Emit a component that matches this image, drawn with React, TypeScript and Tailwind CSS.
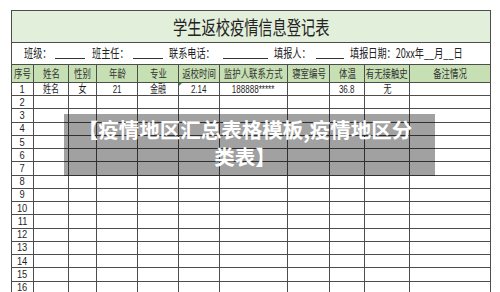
import clsx from "clsx";

const cols =
  "grid grid-cols-[22px_35px_28px_41px_41px_41px_68px_42px_35px_45px_81px]";

const headers = ["序号", "姓名", "性别", "年龄", "专业", "返校时间", "监护人联系方式", "寝室编号", "体温", "有无接触史", "备注情况"];
const first = ["1", "姓名", "女", "21", "金融", "2.14", "188888*****", "", "36.8", "无", ""];

// the source sheet is squeezed sideways, so every label is narrowed
function T({ children, className }: { children: React.ReactNode; className?: string }) {
  return (
    <span className={clsx("inline-block shrink-0 whitespace-nowrap scale-x-[0.73]", className)}>
      {children}
    </span>
  );
}

function Line({ className }: { className: string }) {
  return <span className={clsx("self-end mb-[5px] h-px shrink-0 bg-[#333]", className)} />;
}

function Cell({ children, className }: { children?: React.ReactNode; className?: string }) {
  return (
    <div className={clsx("relative flex items-center justify-center overflow-visible border-r border-b border-[#4d4d4d]", className)}>
      {children}
    </div>
  );
}

export default function App() {
  const rows = Array.from({ length: 16 }, (_, i) => (i === 0 ? first : [String(i + 1), "", "", "", "", "", "", "", "", "", ""]));

  return (
    <div className="relative h-[292px] w-[500px] overflow-hidden bg-white font-['Noto_Sans_CJK_SC',sans-serif] text-[#1f1f1f]">
      <div className="ml-[11px] mt-[10px] w-[480px] border-l border-t border-[#4d4d4d]">
        {/* title */}
        <div className="flex h-[32px] items-center justify-center border-r border-b border-[#4d4d4d] bg-[#e2efda] leading-none">
          <T className="text-[19.5px] scale-x-[0.7] text-[#222]">学生返校疫情信息登记表</T>
        </div>

        {/* info line */}
        <div className="flex h-[22px] items-center border-r border-b border-[#4d4d4d] pl-[12px] text-[12.5px] leading-none text-[#222]">
          <span className="w-[27px] shrink-0 whitespace-nowrap">
            <T className="origin-left scale-x-[0.72]">班级：</T>
          </span>
          <Line className="ml-[4px] w-[30px]" />
          <span className="ml-[7px] w-[36px] shrink-0 whitespace-nowrap">
            <T className="origin-left scale-x-[0.72]">班主任：</T>
          </span>
          <Line className="ml-[5px] w-[30px]" />
          <span className="ml-[6px] w-[45px] shrink-0 whitespace-nowrap">
            <T className="origin-left scale-x-[0.72]">联系电话：</T>
          </span>
          <Line className="ml-[9px] w-[45px]" />
          <span className="ml-[6px] w-[37px] shrink-0 whitespace-nowrap">
            <T className="origin-left scale-x-[0.72]">填报人：</T>
          </span>
          <Line className="ml-[5px] w-[28px]" />
          <span className="ml-[6px] w-[130px] shrink-0 whitespace-nowrap">
            <T className="origin-left scale-x-[0.72]">填报日期：20xx年__月__日</T>
          </span>
        </div>

        {/* column heads */}
        <div className={clsx(cols, "h-[18px] bg-[#c6e0b4] text-[11.5px] leading-none text-[#333]")}>
          {headers.map((h) => (
            <Cell key={h}>
              <T>{h}</T>
            </Cell>
          ))}
        </div>

        {rows.map((r, i) => (
          <div
            key={i}
            className={clsx(cols, "h-[13.24px] font-['Liberation_Sans','Noto_Sans_CJK_SC',sans-serif] text-[11px] leading-none")}
          >
            {r.map((v, j) => (
              <Cell key={j}>
                {i === 0 && j === 5 && (
                  <svg className="absolute left-0 top-0" width="3" height="3" viewBox="0 0 3 3">
                    <polygon points="0,0 3,0 0,3" fill="#1e9a3c" />
                  </svg>
                )}
                {v && <T className={j === 0 ? "scale-x-[0.85]" : undefined}>{v}</T>}
              </Cell>
            ))}
          </div>
        ))}
      </div>

      {/* caption banner over the sheet */}
      <div className="absolute left-[64px] top-[114px] flex h-[62px] w-[371px] flex-col items-center bg-black/[0.37] pt-[2px] pr-[9px] text-[20.5px] font-bold leading-[27px] text-white">
        <span className="whitespace-nowrap">【疫情地区汇总表格模板,疫情地区分</span>
        <span className="whitespace-nowrap">类表】</span>
      </div>
    </div>
  );
}
